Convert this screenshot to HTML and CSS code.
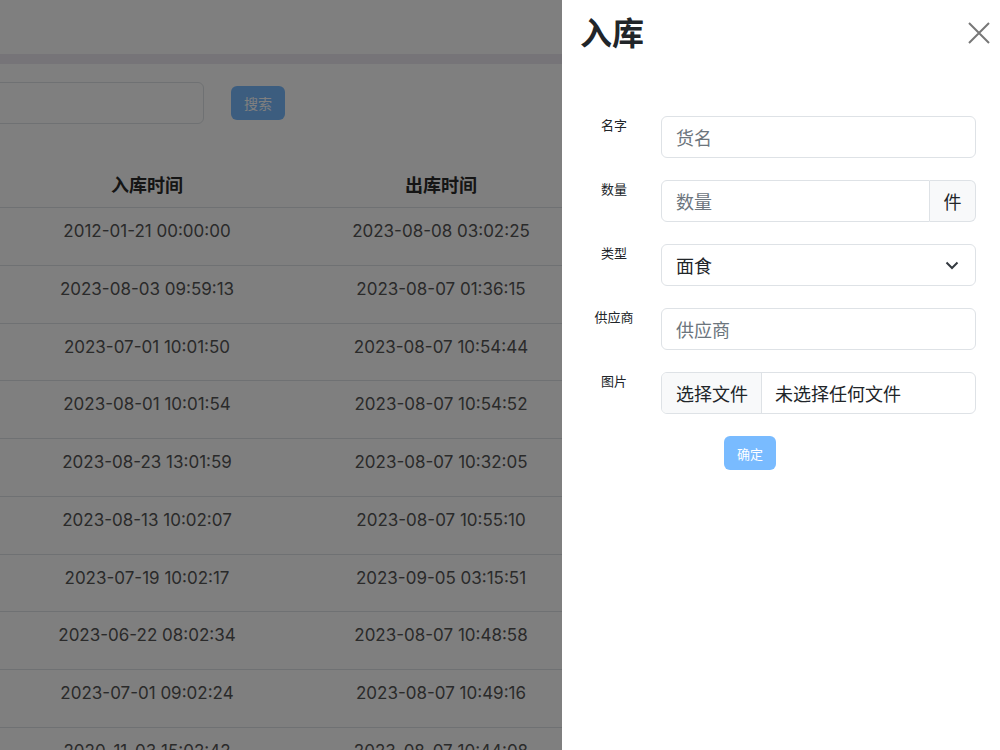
FILE: index.html
```html
<!doctype html>
<html lang="zh-CN">
<head>
  <meta charset="UTF-8">
  <title>库存管理</title>
  <link rel="stylesheet" href="styles.css">
</head>
<body>
  <div class="page">
    <nav class="topbar"></nav>
    <div class="stripe"></div>
    <form class="search">
      <input type="text" class="search_input">
      <button type="button" class="btn">搜索</button>
    </form>
    <table class="goods">
      <thead>
        <tr><th>入库时间</th><th>出库时间</th><th></th></tr>
      </thead>
      <tbody>
        <tr><td>2012-01-21 00:00:00</td><td>2023-08-08 03:02:25</td><td></td></tr>
        <tr><td>2023-08-03 09:59:13</td><td>2023-08-07 01:36:15</td><td></td></tr>
        <tr><td>2023-07-01 10:01:50</td><td>2023-08-07 10:54:44</td><td></td></tr>
        <tr><td>2023-08-01 10:01:54</td><td>2023-08-07 10:54:52</td><td></td></tr>
        <tr><td>2023-08-23 13:01:59</td><td>2023-08-07 10:32:05</td><td></td></tr>
        <tr><td>2023-08-13 10:02:07</td><td>2023-08-07 10:55:10</td><td></td></tr>
        <tr><td>2023-07-19 10:02:17</td><td>2023-09-05 03:15:51</td><td></td></tr>
        <tr><td>2023-06-22 08:02:34</td><td>2023-08-07 10:48:58</td><td></td></tr>
        <tr><td>2023-07-01 09:02:24</td><td>2023-08-07 10:49:16</td><td></td></tr>
        <tr><td>2020-11-03 15:02:42</td><td>2023-08-07 10:44:08</td><td></td></tr>
      </tbody>
    </table>
  </div>

  <div class="backdrop"></div>

  <aside class="drawer">
    <header class="drawer_head">
      <h3>入库</h3>
      <a href="#" class="close" aria-label="关闭">
        <svg width="22" height="22" viewBox="0 0 22 22"><path d="M1 1 L21 21 M21 1 L1 21" stroke="#777" stroke-width="2" fill="none"/></svg>
      </a>
    </header>
    <form class="entry">
      <label class="lbl">名字</label>
      <input type="text" class="field" placeholder="货名">

      <label class="lbl">数量</label>
      <div class="group">
        <input type="text" class="field" placeholder="数量">
        <span class="addon">件</span>
      </div>

      <label class="lbl">类型</label>
      <div class="field select">
        <span>面食</span>
        <svg width="14" height="9" viewBox="0 0 14 9"><path d="M1.5 1.5 L7 7 L12.5 1.5" stroke="#343a40" stroke-width="2" fill="none"/></svg>
      </div>

      <label class="lbl">供应商</label>
      <input type="text" class="field" placeholder="供应商">

      <label class="lbl">图片</label>
      <div class="field file">
        <span class="file_btn">选择文件</span>
        <span class="file_name">未选择任何文件</span>
      </div>

      <div class="submit_row">
        <button type="button" class="btn">确定</button>
      </div>
    </form>
  </aside>
</body>
</html>
```

FILE: styles.css
```css
body { margin: 0; background: #fff; font-family: "Noto Sans CJK SC", sans-serif; color: #212529; overflow: hidden; }

.page { width: 1000px; }
.topbar { height: 54px; background: #fff; }
.stripe { height: 10px; background: #ece8f0; }

.search { display: flex; align-items: center; margin: 18px 0 0 -60px; }
.search_input { width: 264px; height: 42px; box-sizing: border-box; border: 1px solid #dee2e6; border-radius: 6px; }
.search .btn { margin-left: 27px; padding: 0 13px; font-size: 14px; }

.btn { height: 34px; padding: 0 13px; border: 0; border-radius: 6px; background: #79bbff; color: #fff; font-family: "Noto Sans CJK SC", sans-serif; font-size: 13px; }

.goods { border-collapse: collapse; margin-top: 41px; width: 1000px; table-layout: fixed; }
.goods th:nth-child(1), .goods th:nth-child(2) { width: 294px; }
.goods th { font-size: 18px; font-weight: bold; line-height: 22px; padding: 8px 0 12px; color: #2a2a2a; border-bottom: 1px solid #dee2e6; }
.goods td { font-family: "Inter", "Noto Sans CJK SC", sans-serif; font-size: 17px; line-height: 20px; padding: 13px 0 23.75px; text-align: center; color: #555; border-bottom: 1px solid #dee2e6; }

.backdrop { position: fixed; inset: 0; background: rgba(0, 0, 0, 0.5); }

.drawer { position: fixed; top: 0; right: 0; bottom: 0; width: 438px; background: #fff; }
.drawer_head { display: flex; align-items: center; justify-content: space-between; padding: 11px 10px 3px 18px; height: 40px; }
.drawer_head h3 { margin: 0; font-size: 32px; font-weight: bold; color: #212529; line-height: 40px; }
.close { display: flex; margin-top: 4px; }

.entry { display: grid; grid-template-columns: 90px 1fr; column-gap: 9px; row-gap: 22px; padding: 62px 24px 0 0; }
.lbl { font-size: 13px; line-height: 18px; text-align: center; padding-top: 0; padding-left: 14px; color: #212529; }
.field { height: 42px; box-sizing: border-box; border: 1px solid #dee2e6; border-radius: 6px; padding: 0 14px; font-family: "Noto Sans CJK SC", sans-serif; font-size: 18px; color: #212529; background: #fff; width: 100%; }
.field::placeholder { color: #6c757d; }

.group { display: flex; }
.group .field { border-radius: 6px 0 0 6px; flex: 1; }
.addon { width: 46px; box-sizing: border-box; display: flex; align-items: center; justify-content: center; border: 1px solid #dee2e6; border-left: 0; border-radius: 0 6px 6px 0; background: #f8f9fa; font-size: 18px; }

.select { display: flex; align-items: center; justify-content: space-between; padding-right: 16px; }
.file { display: flex; align-items: center; padding: 0; overflow: hidden; }
.file_btn { height: 100%; display: flex; align-items: center; padding: 0 13px 0 14px; background: #f8f9fa; border-right: 1px solid #dee2e6; }
.file_name { padding-left: 13px; }

.submit_row { grid-column: 2; padding: 0 0 0 63px; }
```
